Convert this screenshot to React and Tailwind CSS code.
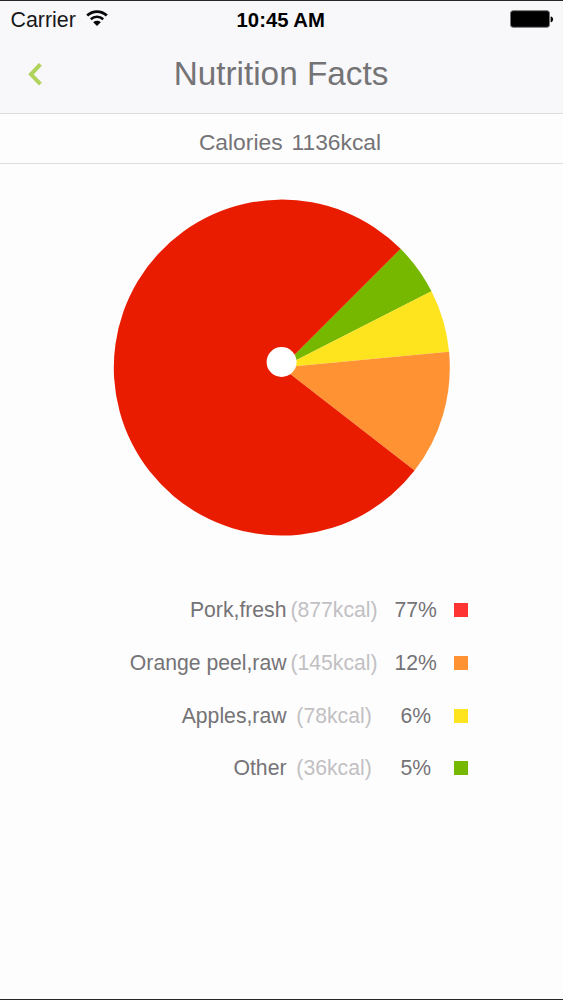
import React from "react";

const items = [
  { name: "Pork,fresh", kcal: 877, percent: 77, fill: "#e91c00", swatch: "bg-[#fd3432]" },
  { name: "Orange peel,raw", kcal: 145, percent: 12, fill: "#ff9233", swatch: "bg-[#ff9233]" },
  { name: "Apples,raw", kcal: 78, percent: 6, fill: "#fee31f", swatch: "bg-[#fee31f]" },
  { name: "Other", kcal: 36, percent: 5, fill: "#76b700", swatch: "bg-[#76b700]" },
];

const RADIUS = 168;

function point(deg) {
  const rad = (deg * Math.PI) / 180;
  return `${(RADIUS * Math.cos(rad)).toFixed(2)} ${(RADIUS * Math.sin(rad)).toFixed(2)}`;
}

function StatusBar() {
  return (
    <div className="grid grid-cols-[1fr_auto_1fr] items-center h-[38px] pl-[10.5px] pr-[9px] text-black">
      <div className="flex items-center gap-[10px]">
        <span className="text-[21.4px] leading-[24px] text-[#171719]">Carrier</span>
        <svg width="22" height="17" viewBox="0 0 22 17" className="mb-[3px]" fill="none" stroke="#08080a">
          <path d="M1.2 5.5C6.8.2 15.2.2 20.8 5.5" strokeWidth="2.8" />
          <path d="M4.8 9.2C8.4 5.9 13.6 5.9 17.2 9.2" strokeWidth="2.6" />
          <path d="M11 16L7.2 12.2C9.4 10.4 12.6 10.4 14.8 12.2Z" fill="#08080a" stroke="none" />
        </svg>
      </div>
      <span className="-ml-[3px] text-[20.3px] leading-[24px] font-bold">10:45 AM</span>
      <svg width="44" height="18" viewBox="0 0 44 18" className="justify-self-end mb-[3px]">
        <rect x="0.5" y="0.7" width="39" height="16.6" rx="2.5" fill="#000" stroke="#77777a" />
        <path d="M40.6 6.5C44 7 44 11.8 40.6 12.3Z" fill="#000" />
      </svg>
    </div>
  );
}

function PieChart() {
  // slices run counter-clockwise in the list, so draw them from the last one
  let angle = -45;
  const slices = [...items].reverse().map((item) => {
    const start = angle;
    angle += item.percent * 3.6;
    const large = item.percent > 50 ? 1 : 0;
    return (
      <path
        key={item.name}
        d={`M0 0L${point(start)}A${RADIUS} ${RADIUS} 0 ${large} 1 ${point(angle)}Z`}
        fill={item.fill}
      />
    );
  });

  return (
    <svg width="337" height="337" viewBox="-168.8 -168.6 337 337">
      {slices}
      <circle cx="-0.2" cy="-5.6" r="15" fill="#fff" />
    </svg>
  );
}

export default function App() {
  return (
    <div className="flex flex-col w-[563px] h-[1000px] bg-[#fefdfe] border-t border-b border-[#29262b] font-['Liberation_Sans',Arial,sans-serif] text-[#747376] overflow-hidden">
      <header className="h-[113px] bg-[#f8f7fa] border-b border-[#dddcdf]">
        <StatusBar />
        <div className="grid grid-cols-[1fr_auto_1fr] items-center h-[70px] pl-[28px]">
          <button className="justify-self-start" aria-label="Back">
            <svg width="15" height="24" viewBox="0 0 15 24" fill="none" stroke="#b0d35b" strokeWidth="4">
              <path d="M12.4 2.4L3 12.3L12.4 22.2" />
            </svg>
          </button>
          <h1 className="text-[33.3px] leading-[40px] -ml-[29px]">Nutrition Facts</h1>
        </div>
      </header>

      <div className="flex justify-center gap-[9px] h-[50px] pt-[15px] pl-[17px] border-b border-[#dedde0] text-[22.8px] leading-[26px]">
        <span>Calories</span>
        <span>1136kcal</span>
      </div>

      <div className="flex justify-center pt-[35px]">
        <PieChart />
      </div>

      <ul className="mt-[48px] text-[21.2px] leading-[32px]">
        {items.map((item) => (
          <li key={item.name} className="flex items-center h-[52.7px]">
            <span className="w-[286.5px] text-right">{item.name}</span>
            <span className="w-[95px] text-center text-[#c1c0c3]">({item.kcal}kcal)</span>
            <span className="w-[68.5px] text-center">{item.percent}%</span>
            <span className={`ml-[4px] w-[14px] h-[14px] ${item.swatch}`} />
          </li>
        ))}
      </ul>
    </div>
  );
}
